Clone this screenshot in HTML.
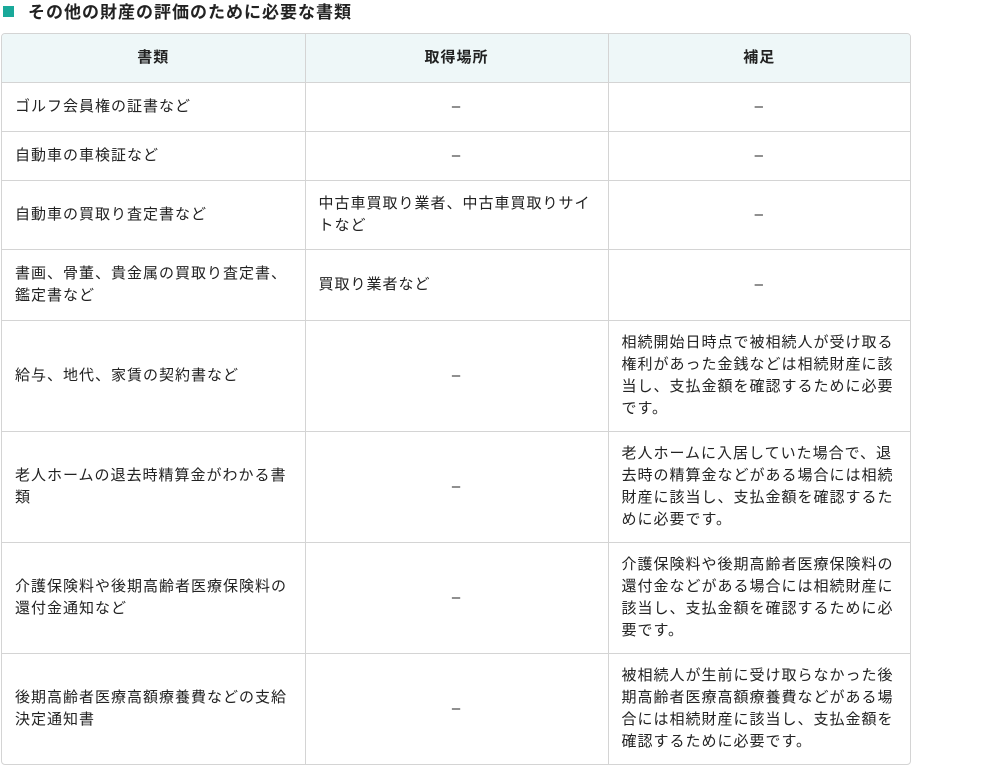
<!DOCTYPE html><html><head><meta charset="utf-8"><style>
body{margin:0;background:#fff;font-family:"Liberation Sans","Noto Sans CJK JP",sans-serif;color:#222;}
.t{position:absolute;left:3px;top:2px;font-size:17px;letter-spacing:1px;font-weight:bold;line-height:22px;}
.t span{display:inline-block;width:11px;height:11px;background:#19a99a;margin-right:14px;vertical-align:1px}
.w{position:absolute;left:1px;top:33px;width:908px;border:1px solid #d4d4d4;border-radius:4px;overflow:hidden}
table{border-collapse:collapse;width:100%;table-layout:fixed;font-size:15px;letter-spacing:1px;line-height:22px}
td,th{border-right:1px solid #d4d4d4;border-bottom:1px solid #d4d4d4;padding:0 13px;vertical-align:middle;text-align:left}
td:last-child,th:last-child{border-right:none}
tr:last-child td{border-bottom:none}
th{background:#eef7f8;height:48px;text-align:center;font-weight:bold}
.c{text-align:center}
</style></head><body>
<div class="t"><span></span>その他の財産の評価のために必要な書類</div>
<div class="w"><table>
<colgroup><col style="width:303px"><col style="width:303px"><col></colgroup>
<tr><th>書類</th><th>取得場所</th><th>補足</th></tr>
<tr style="height:49px"><td>ゴルフ会員権の証書など</td><td class="c">–</td><td class="c">–</td></tr>
<tr style="height:49px"><td>自動車の車検証など</td><td class="c">–</td><td class="c">–</td></tr>
<tr style="height:69px"><td>自動車の買取り査定書など</td><td>中古車買取り業者、中古車買取りサイトなど</td><td class="c">–</td></tr>
<tr style="height:71px"><td>書画、骨董、貴金属の買取り査定書、鑑定書など</td><td>買取り業者など</td><td class="c">–</td></tr>
<tr style="height:111px"><td>給与、地代、家賃の契約書など</td><td class="c">–</td><td>相続開始日時点で被相続人が受け取る権利があった金銭などは相続財産に該当し、支払金額を確認するために必要です。</td></tr>
<tr style="height:111px"><td>老人ホームの退去時精算金がわかる書類</td><td class="c">–</td><td>老人ホームに入居していた場合で、退去時の精算金などがある場合には相続財産に該当し、支払金額を確認するために必要です。</td></tr>
<tr style="height:111px"><td>介護保険料や後期高齢者医療保険料の還付金通知など</td><td class="c">–</td><td>介護保険料や後期高齢者医療保険料の還付金などがある場合には相続財産に該当し、支払金額を確認するために必要です。</td></tr>
<tr style="height:110px"><td>後期高齢者医療高額療養費などの支給決定通知書</td><td class="c">–</td><td>被相続人が生前に受け取らなかった後期高齢者医療高額療養費などがある場合には相続財産に該当し、支払金額を確認するために必要です。</td></tr>
</table></div>
</body></html>
